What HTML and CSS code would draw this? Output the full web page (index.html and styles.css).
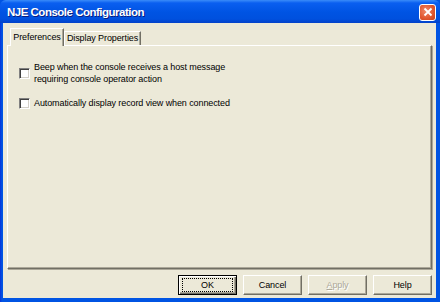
FILE: index.html
```html
<!DOCTYPE html>
<html lang="en">
<head>
    <meta charset="UTF-8">
    <title>NJE Console Configuration</title>
    <link rel="stylesheet" href="styles.css">
</head>
<body>
    <div class="window">
        <div class="titlebar">
            <span class="title">NJE Console Configuration</span>
            <span class="close">
                <svg width="10" height="10" viewBox="0 0 10 10">
                    <path d="M1.5 1.5 L8.5 8.5 M8.5 1.5 L1.5 8.5" stroke="#fff" stroke-width="1.8" fill="none"/>
                </svg>
            </span>
        </div>
        <div class="frame">
            <div class="client">
                <div class="tabs">
                    <div class="tab active">Preferences</div>
                    <div class="tab wide">Display Properties</div>
                </div>
                <div class="panel">
                    <div class="option">
                        <span class="check"></span>
                        <span class="label">Beep when the console receives a host message<br>requiring console operator action</span>
                    </div>
                    <div class="option">
                        <span class="check"></span>
                        <span class="label">Automatically display record view when connected</span>
                    </div>
                </div>
                <div class="buttons">
                    <button class="btn default"><span class="focus">OK</span></button>
                    <button class="btn">Cancel</button>
                    <button class="btn disabled"><span class="u">A</span>pply</button>
                    <button class="btn">Help</button>
                </div>
            </div>
        </div>
    </div>
</body>
</html>
```

FILE: styles.css
```css
* {
    box-sizing: border-box;
}

body {
    margin: 0;
    font-family: "Liberation Sans", Arial, sans-serif;
    font-size: 9px;
    letter-spacing: -0.1px;
    color: #000;
}

.window {
    width: 440px;
    height: 302px;
    overflow: hidden;
    display: flex;
    flex-direction: column;
    background: #0054e3;
}

.titlebar {
    flex-shrink: 0;
    height: 23px;
    display: flex;
    align-items: center;
    justify-content: space-between;
    padding: 1px 4px 0 7px;
    background: linear-gradient(to bottom, #3a8cf9 0px, #0a5ff0 3px, #0054e3 12px, #0050de 19px, #0342c9 23px);
    border-radius: 6px 6px 0 0;
}

.title {
    color: #fff;
    font-weight: bold;
    font-size: 11.5px;
    letter-spacing: -0.5px;
    text-shadow: 1px 1px 0 #0a1e80;
}

.close {
    width: 17px;
    height: 17px;
    border: 1px solid #fff;
    border-radius: 3px;
    background: radial-gradient(circle at 40% 40%, #f08a6a, #e0562e 60%, #c8401c);
    display: flex;
    align-items: center;
    justify-content: center;
}

.frame {
    flex: 1;
    display: flex;
    padding: 0 4px 4px 3px;
    background: linear-gradient(to right, #0831d9, #0054e3 2px);
}

.client {
    flex: 1;
    background: #ece9d8;
    display: flex;
    flex-direction: column;
    padding: 5px 4px 3px 4px;
}

.tabs {
    flex-shrink: 0;
    display: flex;
    align-items: flex-end;
    height: 17px;
    padding-left: 3px;
    position: relative;
    z-index: 1;
}

.tab {
    width: 77px;
    height: 14px;
    line-height: 13px;
    text-align: center;
    border-top: 1px solid #fff;
    border-left: 1px solid #fff;
    border-right: 1px solid #716f64;
    box-shadow: inset -1px 0 0 #aca899;
}

.tab.active {
    width: 54px;
    height: 18px;
    line-height: 17px;
    background: #ece9d8;
    margin-bottom: -1px;
}

.panel {
    flex-shrink: 0;
    height: 224px;
    border-top: 1px solid #fff;
    border-left: 1px solid #fff;
    border-right: 1px solid #716f64;
    border-bottom: 1px solid #716f64;
    box-shadow: inset -1px -1px 0 #aca899, 1px 1px 0 #aca899;
    padding: 15px 0 0 11px;
    display: flex;
    flex-direction: column;
    gap: 12px;
}

.option {
    display: flex;
    align-items: center;
    gap: 4px;
    line-height: 12px;
}

.check {
    width: 11px;
    height: 11px;
    background: #fff;
    border-top: 1px solid #808080;
    border-left: 1px solid #808080;
    border-right: 1px solid #fff;
    border-bottom: 1px solid #fff;
    box-shadow: inset 1px 1px 0 #404040, inset -1px -1px 0 #d4d0c8;
    flex-shrink: 0;
}

.buttons {
    display: flex;
    justify-content: flex-end;
    gap: 6px;
    margin-top: 6px;
}

.btn {
    width: 59px;
    height: 20px;
    padding: 0;
    font: inherit;
    letter-spacing: inherit;
    color: #000;
    background: #ece9d8;
    border-top: 1px solid #fff;
    border-left: 1px solid #fff;
    border-right: 1px solid #716f64;
    border-bottom: 1px solid #716f64;
    box-shadow: inset -1px -1px 0 #aca899;
    display: flex;
    align-items: center;
    justify-content: center;
}

.btn.default {
    border: 1px solid #000;
    box-shadow: inset 1px 1px 0 #fff, inset -1px -1px 0 #716f64, inset -2px -2px 0 #aca899;
}

.focus {
    display: flex;
    align-items: center;
    justify-content: center;
    width: 51px;
    height: 14px;
    border: 1px dotted #000;
}

.btn.disabled {
    color: #aca899;
    text-shadow: 1px 1px 0 #fff;
}

.u {
    text-decoration: underline;
}
```
